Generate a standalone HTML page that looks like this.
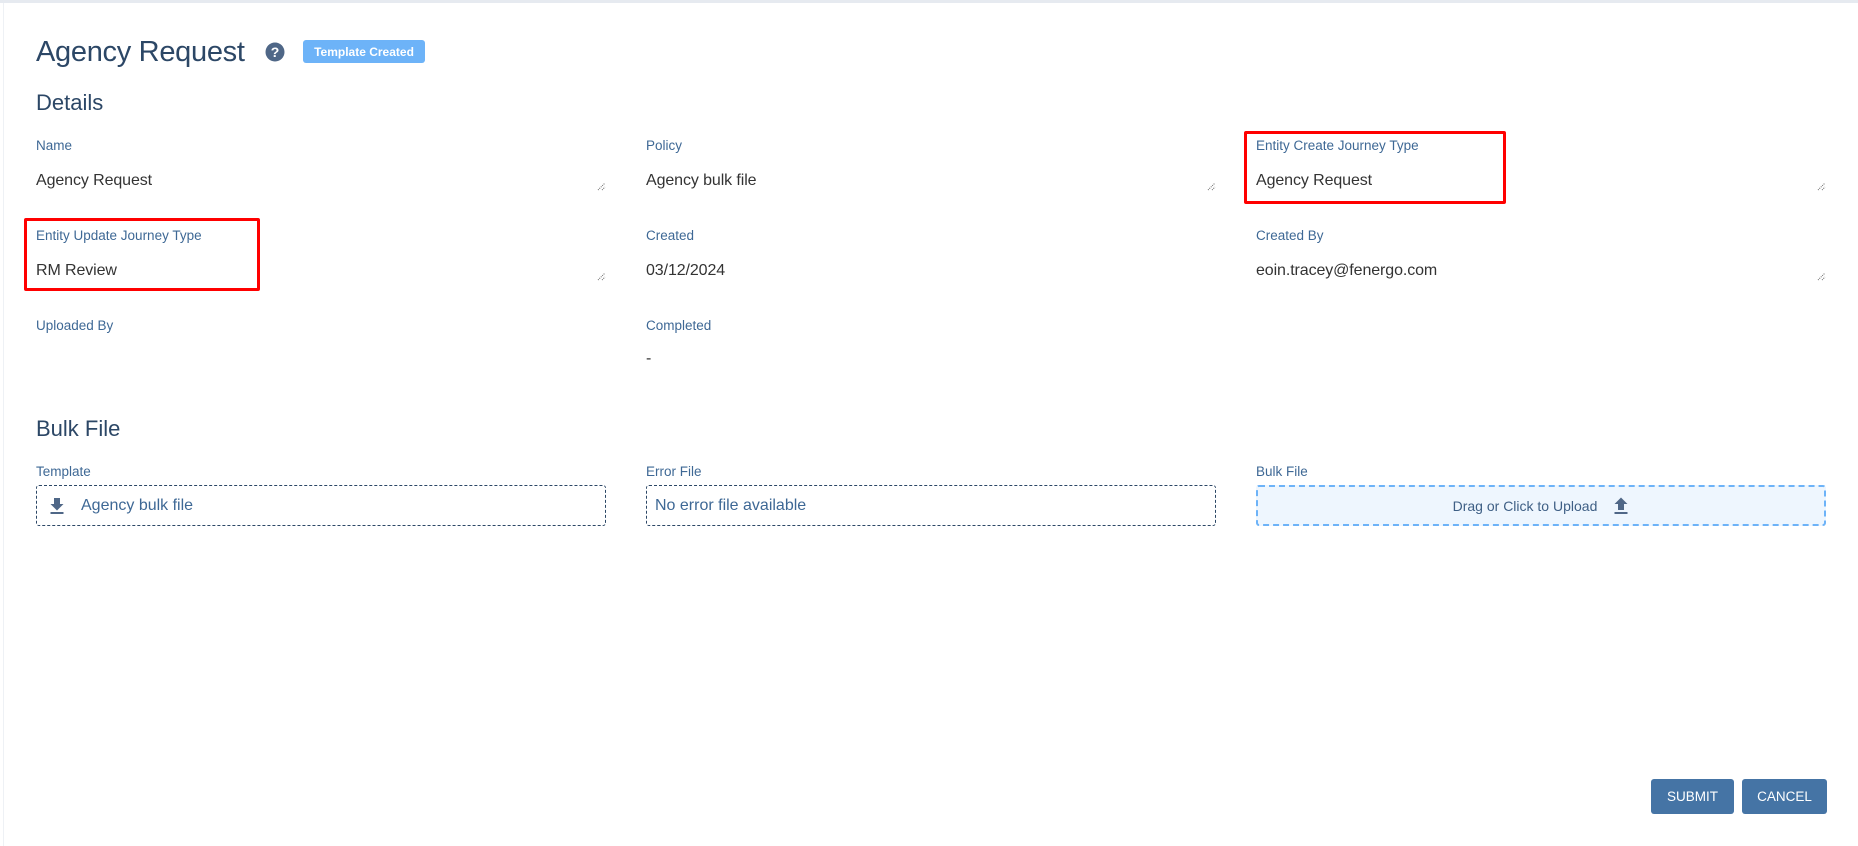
<!DOCTYPE html>
<html><head><meta charset="utf-8"><style>
*{box-sizing:border-box;margin:0;padding:0}
html,body{width:1858px;height:846px;background:#fff;font-family:"Liberation Sans",sans-serif;overflow:hidden;position:relative}
.topline{position:absolute;left:0;top:0;width:1858px;height:3px;background:#e6eaf0}
.leftline{position:absolute;left:3px;top:3px;width:1px;height:843px;background:#eef1f5}
.abs{position:absolute;white-space:nowrap}
.title{left:36px;top:36px;font-size:29px;color:#2c4766;letter-spacing:-0.3px}
.h2{font-size:22px;color:#2c4766;left:36px}
.lbl{font-size:13.5px;color:#3e6895}
.val{font-size:16px;color:#333;letter-spacing:-0.1px}
.grip{position:absolute;width:9px;height:9px}
.red{position:absolute;border:3px solid #ff0000;border-radius:2px}
.box{position:absolute;top:485px;height:41px;width:570px;border:1px dashed #2c4766;border-radius:3px;font-size:16px;color:#3e6895;display:flex;align-items:center}
.btn{position:absolute;top:779px;height:35px;background:#4574a5;color:#fff;border-radius:3px;font-size:13.5px;display:flex;align-items:center;justify-content:center}
</style></head><body>
<div class="topline"></div><div class="leftline"></div>
<div class="abs title">Agency Request</div>
<svg class="abs" style="left:265px;top:42px" width="20" height="20" viewBox="0 0 20 20"><circle cx="10" cy="10" r="9.5" fill="#4f6787"/><text x="10" y="15" text-anchor="middle" font-family="Liberation Sans" font-weight="bold" font-size="14" fill="#fff">?</text></svg>
<div class="abs" style="left:303px;top:40px;width:122px;height:23px;background:#6db3f8;border-radius:3px;color:#fff;font-size:12px;font-weight:bold;display:flex;align-items:center;justify-content:center">Template Created</div>
<div class="abs h2" style="top:90px">Details</div>

<div class="abs lbl" style="left:36px;top:138px">Name</div>
<div class="abs lbl" style="left:646px;top:138px">Policy</div>
<div class="abs lbl" style="left:1256px;top:138px">Entity Create Journey Type</div>
<div class="abs val" style="left:36px;top:172px">Agency Request</div>
<div class="abs val" style="left:646px;top:172px">Agency bulk file</div>
<div class="abs val" style="left:1256px;top:172px">Agency Request</div>

<div class="abs lbl" style="left:36px;top:228px">Entity Update Journey Type</div>
<div class="abs lbl" style="left:646px;top:228px">Created</div>
<div class="abs lbl" style="left:1256px;top:228px">Created By</div>
<div class="abs val" style="left:36px;top:262px">RM Review</div>
<div class="abs val" style="left:646px;top:262px">03/12/2024</div>
<div class="abs val" style="left:1256px;top:262px">eoin.tracey@fenergo.com</div>

<div class="abs lbl" style="left:36px;top:318px">Uploaded By</div>
<div class="abs lbl" style="left:646px;top:318px">Completed</div>
<div class="abs val" style="left:646px;top:350px">-</div>

<svg class="grip" style="left:597px;top:182px" viewBox="0 0 9 9"><path d="M1 8L8 1M5 8L8 5" stroke="#666" stroke-width="1" stroke-dasharray="1 1"/></svg>
<svg class="grip" style="left:1207px;top:182px" viewBox="0 0 9 9"><path d="M1 8L8 1M5 8L8 5" stroke="#666" stroke-width="1" stroke-dasharray="1 1"/></svg>
<svg class="grip" style="left:1817px;top:182px" viewBox="0 0 9 9"><path d="M1 8L8 1M5 8L8 5" stroke="#666" stroke-width="1" stroke-dasharray="1 1"/></svg>
<svg class="grip" style="left:597px;top:272px" viewBox="0 0 9 9"><path d="M1 8L8 1M5 8L8 5" stroke="#666" stroke-width="1" stroke-dasharray="1 1"/></svg>
<svg class="grip" style="left:1817px;top:272px" viewBox="0 0 9 9"><path d="M1 8L8 1M5 8L8 5" stroke="#666" stroke-width="1" stroke-dasharray="1 1"/></svg>

<div class="red" style="left:1244px;top:131px;width:262px;height:73px"></div>
<div class="red" style="left:24px;top:218px;width:236px;height:73px"></div>

<div class="abs h2" style="top:416px">Bulk File</div>
<div class="abs lbl" style="left:36px;top:464px">Template</div>
<div class="abs lbl" style="left:646px;top:464px">Error File</div>
<div class="abs lbl" style="left:1256px;top:464px">Bulk File</div>

<div class="box" style="left:36px">
<svg style="margin-left:12px" width="16" height="18" viewBox="0 0 16 18"><path d="M5 1h6v6h3.5L8 13.5 1.5 7H5z" fill="#4f6787"/><rect x="1.5" y="15" width="13" height="2" fill="#4f6787"/></svg>
<span style="margin-left:16px">Agency bulk file</span></div>
<div class="box" style="left:646px"><span style="margin-left:8px">No error file available</span></div>
<div class="box" style="left:1256px;border:2px dashed #6db3f8;background:#eef6fe;justify-content:center;font-size:14px;color:#3e5f85">
<span>Drag or Click to Upload</span>
<svg style="margin-left:16px" width="16" height="18" viewBox="0 0 16 18"><path d="M5 13h6V7h3.5L8 0.5 1.5 7H5z" fill="#4f6787"/><rect x="1.5" y="15" width="13" height="2" fill="#4f6787"/></svg>
</div>

<div class="btn" style="left:1651px;width:83px">SUBMIT</div>
<div class="btn" style="left:1742px;width:85px">CANCEL</div>
</body></html>
